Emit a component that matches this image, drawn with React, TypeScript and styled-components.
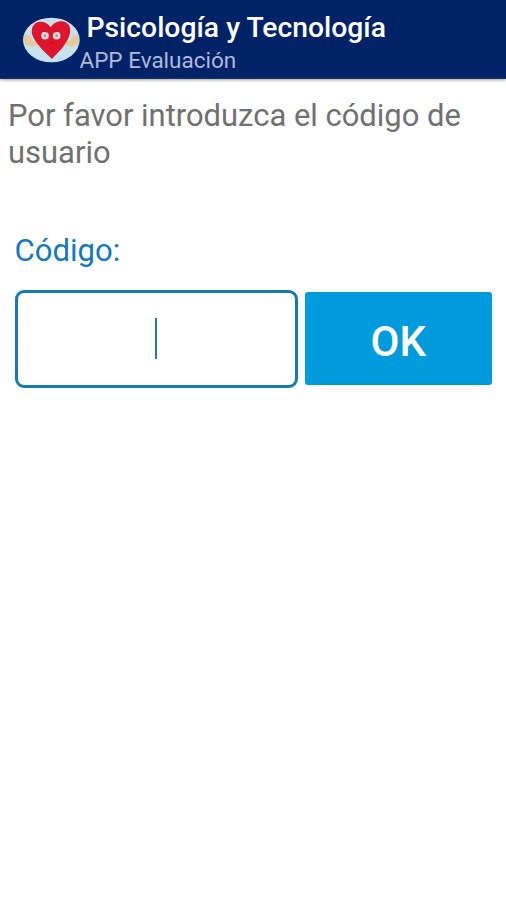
import React from 'react';
import styled, { createGlobalStyle } from 'styled-components';

const GlobalStyle = createGlobalStyle`
  * { box-sizing: border-box; }
  body { margin: 0; background: #fff; font-family: Roboto, sans-serif; }
`;
const Screen = styled.div`
  height: 900px;
  display: flex;
  flex-direction: column;
  background: #fff;
`;
const Header = styled.header`
  height: 79px;
  flex: none;
  display: flex;
  padding: 12px 0 0 22px;
  background: #002267;
  border-bottom: 1px solid #1d3468;
  box-shadow: 0 1px 3px rgba(0, 0, 0, 0.4);
`;
const Logo = styled.svg`
  width: 58px;
  height: 56px;
  flex: none;
`;
const Titles = styled.div`
  display: flex;
  flex-direction: column;
  white-space: nowrap;
`;
const Title = styled.h1`
  margin: 0 0 0 6.5px;
  font-size: 28.3px;
  font-weight: 500;
  line-height: 31px;
  color: #fff;
`;
const Subtitle = styled.span`
  margin: 2px 0 0 -0.5px;
  font-size: 22.5px;
  line-height: 30px;
  color: #b0b8dc;
`;
const Prompt = styled.p`
  margin: 18px 8px 0;
  font-size: 30.95px;
  line-height: 37px;
  color: #707070;
`;
const Form = styled.form`
  display: flex;
  flex-direction: column;
  margin: 60px 13px 0 14.5px;
`;
const Label = styled.label`
  font-size: 31.1px;
  line-height: 40px;
  color: #147ab8;
`;
const Row = styled.div`
  display: flex;
  gap: 7px;
  margin-top: 18.5px;
`;
const Field = styled.div`
  width: 283px;
  height: 98px;
  display: flex;
  align-items: center;
  justify-content: center;
  border: 3.5px solid #147ab5;
  border-radius: 9px;
`;
const Caret = styled.span`
  width: 2px;
  height: 41px;
  background: #2878b0;
`;
const Button = styled.button`
  width: 187.5px;
  height: 93px;
  margin-top: 2.5px;
  padding: 5px 0 0;
  border: 0;
  border-radius: 3px;
  background: #009bdd;
  color: #fff;
  font: 500 42px Roboto, sans-serif;
`;

const HeartLogo = () => (
  <Logo viewBox="36 36 174 168" aria-hidden="true">
    <ellipse cx="124" cy="120" rx="85" ry="67" fill="#c5e2ee" />
    <g fill="#e7c99b">
      <path d="M42 110 L48 101 L54 112 L57 103 L64 110 L66 122 L88 124 L88 134 L60 140 L44 132 Z" />
      <path d="M206 110 L200 101 L194 112 L191 103 L184 110 L182 122 L160 124 L160 134 L188 140 L204 132 Z" />
    </g>
    <path
      d="M126 177 C113 164 97 152 86 136 C75 121 62 105 66 87 C70 61 105 57 122 82 C137 57 175 58 180 84 C183 104 173 120 163 135 C154 151 138 162 126 177 Z"
      fill="#df142d"
    />
    <g fill="#e8d8d5">
      <circle cx="105" cy="107" r="11.5" />
      <circle cx="140" cy="107" r="11.5" />
    </g>
    <g fill="#a88a8a">
      <circle cx="105" cy="107" r="3.5" />
      <circle cx="140" cy="107" r="3.5" />
    </g>
    <g fill="none" stroke="#a81428" strokeWidth="3">
      <path d="M96 91 L112 97 M134 97 L148 89 M117 130 Q124 124 131 130" />
    </g>
  </Logo>
);

export default function App() {
  return (
    <Screen>
      <GlobalStyle />
      <Header>
        <HeartLogo />
        <Titles>
          <Title>Psicología y Tecnología</Title>
          <Subtitle>APP Evaluación</Subtitle>
        </Titles>
      </Header>
      <Prompt>Por favor introduzca el código de usuario</Prompt>
      <Form>
        <Label>Código:</Label>
        <Row>
          <Field><Caret /></Field>
          <Button type="button">OK</Button>
        </Row>
      </Form>
    </Screen>
  );
}
